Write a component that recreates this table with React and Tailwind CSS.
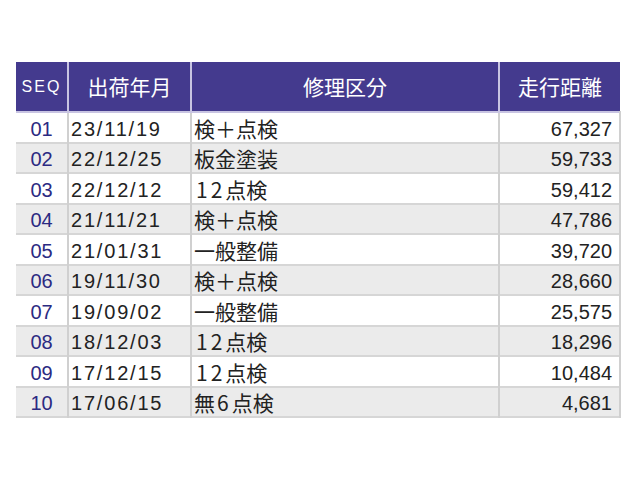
import React from "react";

const rows = [
  ["01", "23/11/19", "検＋点検", "67,327"],
  ["02", "22/12/25", "板金塗装", "59,733"],
  ["03", "22/12/12", "12点検", "59,412"],
  ["04", "21/11/21", "検＋点検", "47,786"],
  ["05", "21/01/31", "一般整備", "39,720"],
  ["06", "19/11/30", "検＋点検", "28,660"],
  ["07", "19/09/02", "一般整備", "25,575"],
  ["08", "18/12/03", "12点検", "18,296"],
  ["09", "17/12/15", "12点検", "10,484"],
  ["10", "17/06/15", "無6点検", "4,681"],
];

const cjk = { fontFamily: '"Noto Sans CJK JP", "Noto Sans", sans-serif' };
const sans = { fontFamily: '"Liberation Sans", Arial, sans-serif' };

// digits inside the kubun text sit a bit looser than the kanji
const Kubun = ({ text }) =>
  text.split(/(\d+)/).map((part, i) =>
    /^\d+$/.test(part) ? (
      <span key={i} className="pl-[2px] tracking-[3px]">{part}</span>
    ) : (
      <span key={i}>{part}</span>
    )
  );

export default function App() {
  return (
    <div className="w-[640px] h-[480px] bg-white pt-[62px] pl-[16px]" style={cjk}>
      <table className="table-fixed border-collapse w-[604px]">
        <colgroup>
          <col className="w-[52px]" />
          <col className="w-[123px]" />
          <col className="w-[308px]" />
          <col className="w-[121px]" />
        </colgroup>
        <thead>
          <tr className="h-[50px] bg-[#443a8e] text-white border-b-2 border-[#c8c4e2]">
            <th className="font-normal text-[16px] tracking-[2px] text-center border-r-2 border-[#c8c4e2]" style={sans}>SEQ</th>
            <th className="font-normal text-[21px] text-center border-r-2 border-[#c8c4e2]">出荷年月</th>
            <th className="font-normal text-[21px] text-center border-r-2 border-[#c8c4e2]">修理区分</th>
            <th className="font-normal text-[21px] text-center">走行距離</th>
          </tr>
        </thead>
        <tbody>
          {rows.map((r, i) => (
            <tr
              key={r[0]}
              className={`h-[30.5px] border-b-2 border-[#d6d6d6] ${i % 2 ? "bg-[#ebebeb]" : "bg-white"}`}
            >
              <td className="pt-[3px] text-center text-[20px] text-[#2b2a82] border-r-2 border-[#d0d0d0] leading-none" style={sans}>{r[0]}</td>
              <td className="pt-[3px] pl-[2px] text-[20px] tracking-[1.8px] text-[#222] border-r-2 border-[#d0d0d0] leading-none" style={sans}>{r[1]}</td>
              <td className="pt-[2px] pl-[2px] text-[21px] text-[#222] border-r-2 border-[#d0d0d0] leading-none">
                <Kubun text={r[2]} />
              </td>
              <td className="pt-[3px] pr-[7px] text-right text-[20px] text-[#222] border-r-2 border-[#d0d0d0] leading-none" style={sans}>{r[3]}</td>
            </tr>
          ))}
        </tbody>
      </table>
    </div>
  );
}
